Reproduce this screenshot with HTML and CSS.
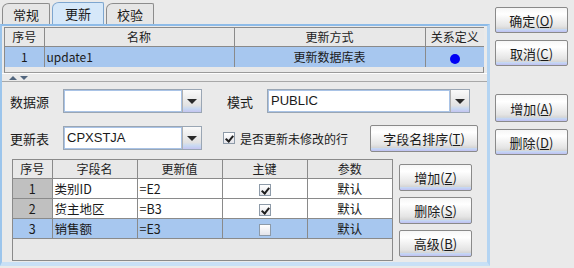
FILE: index.html
```html
<!DOCTYPE html>
<html lang="zh">
<head>
<meta charset="utf-8">
<link rel="stylesheet" href="styles.css">
</head>
<body>
<div class="root">
  <div class="left">
    <div class="tabs">
      <div class="tab">常规</div>
      <div class="tab sel">更新</div>
      <div class="tab">校验</div>
    </div>
    <div class="tabbody">
      <div class="upper">
        <table class="grid gtop">
          <colgroup><col style="width:39px"><col style="width:190px"><col style="width:191px"><col style="width:59px"></colgroup>
          <thead><tr><th>序号</th><th>名称</th><th>更新方式</th><th>关系定义</th></tr></thead>
          <tbody><tr class="selrow"><td class="c">1</td><td>update1</td><td class="c">更新数据库表</td><td class="c"><span class="dot"></span></td></tr></tbody>
        </table>
      </div>
      <div class="splitter"><span class="arr up"></span><span class="arr dn"></span></div>
      <div class="lower">
        <div class="frow">
          <span class="lbl">数据源</span>
          <div class="combo w1"><div class="field"></div><div class="drop"><span class="tri"></span></div></div>
          <span class="lbl lbl2">模式</span>
          <div class="combo w2"><div class="field">PUBLIC</div><div class="drop"><span class="tri"></span></div></div>
        </div>
        <div class="frow r2">
          <span class="lbl">更新表</span>
          <div class="combo w1"><div class="field">CPXSTJA</div><div class="drop"><span class="tri"></span></div></div>
          <label class="chk"><span class="box on"></span>是否更新未修改的行</label>
          <button class="btn sort">字段名排序(<u>T</u>)</button>
        </div>
        <div class="bottom">
          <div class="tblwrap">
            <table class="grid glow">
              <colgroup><col style="width:39px"><col style="width:85px"><col style="width:85px"><col style="width:85px"><col style="width:85px"></colgroup>
              <thead><tr><th>序号</th><th>字段名</th><th>更新值</th><th>主键</th><th>参数</th></tr></thead>
              <tbody>
                <tr><td class="c num">1</td><td>类别ID</td><td>=E2</td><td class="c"><span class="box on"></span></td><td class="c">默认</td></tr>
                <tr><td class="c num">2</td><td>货主地区</td><td>=B3</td><td class="c"><span class="box on"></span></td><td class="c">默认</td></tr>
                <tr class="selrow"><td class="c">3</td><td>销售额</td><td>=E3</td><td class="c"><span class="box"></span></td><td class="c">默认</td></tr>
              </tbody>
            </table>
          </div>
          <div class="btncol">
            <button class="btn">增加(<u>Z</u>)</button>
            <button class="btn">删除(<u>S</u>)</button>
            <button class="btn">高级(<u>B</u>)</button>
          </div>
        </div>
      </div>
    </div>
  </div>
  <div class="side">
    <button class="btn">确定(<u>O</u>)</button>
    <button class="btn">取消(<u>C</u>)</button>
    <button class="btn gapb">增加(<u>A</u>)</button>
    <button class="btn">删除(<u>D</u>)</button>
  </div>
</div>
</body>
</html>
```
FILE: styles.css
```css
* { box-sizing: border-box; }
html, body { margin: 0; padding: 0; }
body {
  width: 574px; height: 268px; overflow: hidden;
  background: #eaeaea;
  font-family: "Noto Sans CJK SC", "Liberation Sans", sans-serif;
  font-size: 12px; color: #1a1a1a;
}
.root { display: flex; height: 268px; }
.left { width: 490px; display: flex; flex-direction: column; }
.tabs { height: 24px; display: flex; align-items: flex-end; gap: 4px; padding-left: 2px; }
.tab {
  width: 48px; height: 21px; border: 1px solid #8c8c8c; border-bottom: none;
  border-top-left-radius: 7px 6px; border-top-right-radius: 2px;
  display: flex; align-items: center; justify-content: center;
  font-size: 13px; background: #e6e6e6;
}
.tab.sel { width: 52px; margin: 0 -2px; height: 22px; background: #d6e8f9; border-color: #7ea6cf; }
.tabbody {
  height: 242px;
  border-top: 2px solid #8dbbe8; border-left: 2px solid #9cc5ec;
  border-right: 3px solid #b4d4f2; border-bottom: 4px solid #c8e0f6;
  display: flex; flex-direction: column;
}
.upper { margin: 1px 0 0 2px; width: 480px; height: 46px; border: 1px solid #8a8a8a; border-bottom-color: #9a9a9a; background: #e8e8e8; }
.grid { border-collapse: collapse; table-layout: fixed; }
.grid th { font-weight: normal; text-align: center; padding: 0; border: 1px solid #8a8a8a; border-top: none; background: #e8e8e8; color: #222; }
.grid td { padding: 0 0 0 2px; border: 1px solid #8a8a8a; white-space: nowrap; overflow: hidden; background: #fff; }
.grid td.c { text-align: center; padding: 0; }
.grid th:first-child, .grid td:first-child { border-left: none; }
.gtop { width: 479px; }
.gtop th { height: 18px; }
.gtop td { height: 21px; border-bottom: none; }
.gtop td:last-child, .gtop th:last-child { border-right: none; }
.selrow td { background: #a7c7ef !important; }
.dot { display: inline-block; width: 10px; height: 10px; border-radius: 50%; background: #0000f4; vertical-align: middle; }
.splitter { height: 8px; border-top: 1px solid #fdfdfd; display: flex; align-items: center; gap: 3px; padding-left: 7px; }
.arr { width: 0; height: 0; border-left: 4px solid transparent; border-right: 4px solid transparent; }
.arr.up { border-bottom: 4px solid #52667e; }
.arr.dn { border-top: 4px solid #52667e; }
.lower { flex: 1; border-top: 1px solid #a8a8a8; padding: 7px 0 0 8px; }
.frow { display: flex; align-items: center; height: 24px; }
.frow.r2 { margin-top: 12px; height: 26px; }
.lbl { width: 53px; font-size: 13px; }
.lbl2 { width: 40px; margin-left: 25px; }
.combo { display: flex; height: 24px; border: 1px solid #9aa6b4; background: #fff; }
.combo .field { flex: 1; border: 1px solid #a9c3e6; padding-left: 2px; line-height: 20px; font-family: "Liberation Sans", sans-serif; font-size: 13px; }
.combo .drop { width: 19px; background: linear-gradient(#fafafa, #e2e2e2 70%, #c8d9f2 85%, #c4c4f0); border-left: 1px solid #b0b0b0; display: flex; align-items: center; justify-content: center; }
.tri { width: 0; height: 0; border-left: 5px solid transparent; border-right: 5px solid transparent; border-top: 5px solid #2a2a2a; }
.combo.w1 { width: 139px; }
.combo.w2 { width: 203px; }
.chk { display: flex; align-items: center; margin-left: 21px; font-size: 12px; }
.box {
  display: inline-block; width: 12px; height: 12px; border: 1px solid #8d9aa8;
  background: linear-gradient(#ffffff, #e4e4ea); vertical-align: middle; position: relative;
}
.chk .box { margin-right: 5px; }
.box.on::after {
  content: ""; position: absolute; left: 3px; top: 1px; width: 3px; height: 6px;
  border-right: 2px solid #1e1e1e; border-bottom: 2px solid #1e1e1e; transform: rotate(40deg);
}
.btn {
  display: flex; align-items: center; justify-content: center;
  width: 73px; height: 27px; padding: 0;
  border: 1px solid #8a8a8a; border-radius: 2px;
  background: linear-gradient(#f6f6f6, #ffffff 25%, #e4e4e4 75%, #d6d6d6 86%, #c6dcf4 88%, #c0c0f2 100%);
  font-family: "Noto Sans CJK SC", "Liberation Sans", sans-serif; font-size: 13px; color: #1a1a1a;
}
.btn u { text-decoration: underline; }
.btn.sort { width: 108px; margin-left: 22px; }
.bottom { display: flex; margin-top: 8px; padding-left: 2px; }
.tblwrap { width: 381px; height: 102px; border: 1px solid #8a8a8a; background: #e8e8e8; }
.glow { width: 379px; }
.glow th { height: 18px; }
.glow td { height: 20px; font-size: 12.5px; }
.glow td:last-child, .glow th:last-child { border-right: none; }
.glow td.num { background: #c0c0c0; }
.btncol { display: flex; flex-direction: column; gap: 6px; margin: 5px 0 0 6px; }
.side { width: 84px; padding: 7px 0 0 5px; display: flex; flex-direction: column; gap: 7px; }
.side .btn { height: 26px; }
.side .gapb { margin-top: 21px; height: 28px; }
```
